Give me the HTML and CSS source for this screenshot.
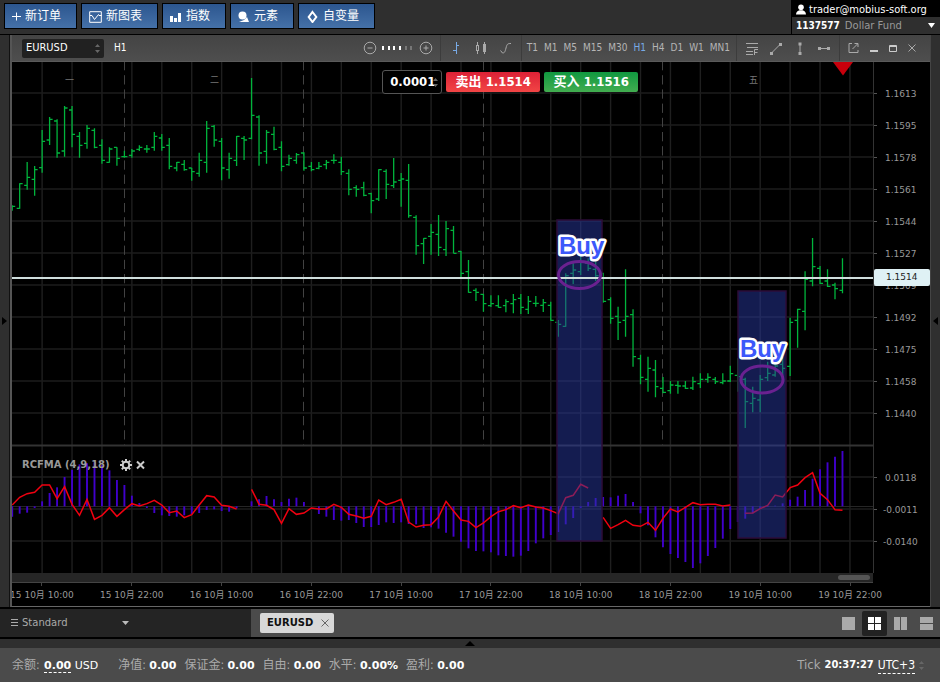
FILE: index.html
```html
<!DOCTYPE html>
<html lang="zh">
<head>
<meta charset="utf-8">
<title>EURUSD</title>
<link rel="stylesheet" href="styles.css">
</head>
<body>
<header class="topbar">
  <nav class="actions">
    <button class="action"><svg width="9" height="13" viewBox="0 0 9 13"><path d="M4.500 2.500v8M0 6.500h9" class="ln"/></svg>新订单</button>
    <button class="action"><svg width="13" height="13" viewBox="0 0 13 13"><path d="M.7 1.700h11.600v10.600H.7zM1 5.500h2l2.500 4 4-5 .5 1h2.500" class="ln"/></svg>新图表</button>
    <button class="action"><svg width="12" height="13" viewBox="0 0 12 13"><path d="M0 6h3v6H0zM4 8h3v4H4zM8 3h3v9H8z" class="fl"/></svg>指数</button>
    <button class="action"><svg width="12" height="13" viewBox="0 0 12 13"><circle cx="4.500" cy="5.500" r="4" class="fl"/><path d="M1 12h10L9 7l-3 3z" class="fl"/></svg>元素</button>
    <button class="action"><svg width="13" height="13" viewBox="0 0 13 13"><path d="M6.500 2l3.800 5-3.800 5-3.800-5z" class="ln bold"/></svg>自变量</button>
  </nav>
  <div class="account">
    <div class="user"><svg width="10" height="11" viewBox="0 0 10 11"><circle cx="5" cy="3.200" r="2.800" class="fl"/><path d="M0 10.500C0 8 2 6.800 3.500 6.300h3C8 6.800 10 8 10 10.500z" class="fl"/></svg><span>trader@mobius-soft.org</span></div>
    <button class="fund"><b>1137577</b><span>Dollar Fund</span><svg width="7" height="5" viewBox="0 0 7 5"><path d="M0 0h7L3.500 5z" class="fl"/></svg></button>
  </div>
</header>

<main class="work">
  <div class="rail"><svg width="5" height="8" viewBox="0 0 5 8"><path d="M0 0l5 4-5 4z"/></svg></div>
  <section class="window">
    <div class="toolbar">
      <label class="symbol"><select aria-label="Symbol"><option>EURUSD</option></select><svg width="5" height="9" viewBox="0 0 5 9"><path d="M0 3l2.500-3L5 3zM0 6l2.500 3L5 6z"/></svg></label>
      <span class="period">H1</span>
      <div class="zoom">
        <button aria-label="Zoom out"><svg width="14" height="14" viewBox="0 0 14 14"><circle cx="7" cy="7" r="5.800" class="ic"/><path d="M4.500 7h5" class="ic"/></svg></button>
        <svg width="32" height="4" viewBox="0 0 32 4"><path d="M0 0h2v4H0zM6 0h2v4H6zM11 0h2v4h-2zM17 0h2v4h-2z" fill="#fff"/><path d="M23 0h2v4h-2zM28 0h2v4h-2z" fill="#777"/></svg>
        <button aria-label="Zoom in"><svg width="14" height="14" viewBox="0 0 14 14"><circle cx="7" cy="7" r="5.800" class="ic"/><path d="M4.500 7h5M7 4.500v5" class="ic"/></svg></button>
      </div>
      <div class="group types">
        <button aria-label="Bars"><svg width="14" height="14" viewBox="0 0 14 14"><path d="M7.500 1v12M8 4.500h2M4 9.500h3" class="ic on"/></svg></button>
        <button aria-label="Candles"><svg width="14" height="14" viewBox="0 0 14 14"><path d="M3.500 1v3M3.500 10v3M10.500 1v12" class="ic"/><rect x="2.500" y="4.500" width="2" height="5" class="ic"/><path d="M9 3h3v8H9z" fill="#aaa"/></svg></button>
        <button aria-label="Line"><svg width="14" height="14" viewBox="0 0 14 14"><path d="M1.500 9.500l2 2.500c2 0 2.500-1 3.500-5s1.500-4.500 5-4.500" class="ic"/></svg></button>
      </div>
      <div class="group frames">
        <button>T1</button><button>M1</button><button>M5</button><button>M15</button><button>M30</button><button class="active">H1</button><button>H4</button><button>D1</button><button>W1</button><button>MN1</button>
      </div>
      <div class="group draws">
        <button aria-label="Fibonacci"><svg width="14" height="14" viewBox="0 0 14 14"><path d="M1 2.500h12M2 6.500h11M1 10.500h7M1 13.500h7M9.500 14V8.500H13M9.500 11.500h3" class="ic"/></svg></button>
        <button aria-label="Trend line"><svg width="14" height="14" viewBox="0 0 14 14"><path d="M2.500 12L11.500 3" class="ic"/><path d="M1 11h3v3H1zM10 2h3v3h-3z" fill="#aaa"/></svg></button>
        <button aria-label="Vertical line"><svg width="14" height="14" viewBox="0 0 14 14"><path d="M7 2v11" class="ic"/><path d="M5.500 1.500h3v3h-3zM5.500 11h3v3h-3z" fill="#aaa"/></svg></button>
        <button aria-label="Horizontal line"><svg width="14" height="14" viewBox="0 0 14 14"><path d="M1 7.500h12" class="ic"/><path d="M1 6h3v3H1zM10 6h3v3h-3z" fill="#aaa"/></svg></button>
      </div>
      <div class="group wins">
        <button aria-label="Detach"><svg width="11" height="12" viewBox="0 0 11 12"><path d="M4 1.500H1v9h9V8M4.500 7L9.500 2M6.500 1.500H10V5" class="ic"/></svg></button>
        <button aria-label="Minimize"><svg width="8" height="12" viewBox="0 0 8 12"><path d="M0 8h8v2H0z" fill="#ccc"/></svg></button>
        <button aria-label="Maximize"><svg width="8" height="12" viewBox="0 0 8 12"><path d="M.5 3.500h7v6h-7zM.5 4.500h7" class="ic lit"/></svg></button>
        <button aria-label="Close"><svg width="8" height="12" viewBox="0 0 8 12"><path d="M.5 2.500l7 7M7.500 2.500l-7 7" class="ic"/></svg></button>
      </div>
    </div>

    <div class="chart">
      <div class="plot">
        <svg id="plot" class="canvas" viewBox="12 62 861 511" preserveAspectRatio="none" role="img" aria-label="EURUSD H1"></svg>
        <div class="trade">
          <label class="volume"><input type="text" value="0.0001" aria-label="Volume"><svg width="5" height="9" viewBox="0 0 5 9"><path d="M0 3l2.500-3L5 3zM0 6l2.500 3L5 6z"/></svg></label>
          <button class="sell">卖出 1.1514</button>
          <button class="buy">买入 1.1516</button>
        </div>
        <div class="indicator"><span>RCFMA (4,9,18)</span>
          <button aria-label="Settings"><svg width="12" height="12" viewBox="0 0 12 12"><circle cx="6" cy="6" r="3.300" fill="none" stroke="#ccc" stroke-width="2"/><path d="M6 0v2.500M6 9.500V12M0 6h2.500M9.500 6H12M1.800 1.800l1.600 1.600M8.600 8.600l1.600 1.600M1.800 10.200l1.600-1.600M8.600 3.400l1.600-1.600" stroke="#ccc" stroke-width="2"/></svg></button>
          <button aria-label="Remove"><svg width="9" height="12" viewBox="0 0 9 12"><path d="M1 2.500l7 7M8 2.500l-7 7" stroke="#ccc" stroke-width="2"/></svg></button>
        </div>
      </div>
      <div class="scale">
        <div class="prices"><span>1.1613</span><span>1.1595</span><span>1.1578</span><span>1.1561</span><span>1.1544</span><span>1.1527</span><span>1.1509</span><span>1.1492</span><span>1.1475</span><span>1.1458</span><span>1.1440</span></div>
        <div class="levels"><span>0.0118</span><span>-0.0011</span><span>-0.0140</span></div>
        <span class="current">1.1514</span>
      </div>
    </div>
    <div class="scroll"><i></i></div>
    <div class="times"><span>15 10月 10:00</span><span>15 10月 22:00</span><span>16 10月 10:00</span><span>16 10月 22:00</span><span>17 10月 10:00</span><span>17 10月 22:00</span><span>18 10月 10:00</span><span>18 10月 22:00</span><span>19 10月 10:00</span><span>19 10月 22:00</span></div>
  </section>
  <div class="rail right"><svg width="5" height="8" viewBox="0 0 5 8"><path d="M5 0L0 4l5 4z"/></svg></div>
</main>

<div class="tabs">
  <button class="workspace"><svg width="7" height="8" viewBox="0 0 7 8"><path d="M0 .5h7M0 3.500h7M0 6.500h7" class="ic"/></svg><span>Standard</span><svg width="7" height="5" viewBox="0 0 7 5"><path d="M0 0h7L3.500 4z" fill="#bbb"/></svg></button>
  <div class="open">
    <button class="tab">EURUSD<svg width="8" height="8" viewBox="0 0 8 8"><path d="M.5.5l7 7M7.500.5l-7 7" stroke="#666"/></svg></button>
    <div class="layouts">
      <button aria-label="Single"><svg width="13" height="13"><path d="M0 0h13v13H0z"/></svg></button>
      <button class="active" aria-label="Grid"><svg width="13" height="13"><path d="M0 0h6v6H0zM7 0h6v6H7zM0 7h6v6H0zM7 7h6v6H7z"/></svg></button>
      <button aria-label="Columns"><svg width="13" height="13"><path d="M0 0h6v13H0zM7 0h6v13H7z"/></svg></button>
      <button aria-label="Rows"><svg width="13" height="13"><path d="M0 0h13v6H0zM0 7h13v6H0z"/></svg></button>
    </div>
  </div>
</div>
<div class="grip"><svg width="10" height="5" viewBox="0 0 10 5"><path d="M0 5l5-5 5 5z"/></svg></div>
<footer class="status">
  <span class="item first">余额: <b class="dash">0.00</b> <em>USD</em></span>
  <span class="item">净值: <b>0.00</b></span>
  <span class="item">保证金: <b>0.00</b></span>
  <span class="item">自由: <b>0.00</b></span>
  <span class="item">水平: <b>0.00%</b></span>
  <span class="item">盈利: <b>0.00</b></span>
  <span class="clock">Tick <b>20:37:27</b> <button class="zone">UTC+3</button><svg width="5" height="9" viewBox="0 0 5 9"><path d="M0 3l2.500-3L5 3zM0 6l2.500 3L5 6z"/></svg></span>
</footer>
<script src="chart.js"></script>
</body>
</html>
```
FILE: styles.css
```css
* { box-sizing: border-box; }
body {
  margin: 0;
  min-height: 100vh;
  display: flex;
  flex-direction: column;
  background: #2f2f2f;
  color: #fff;
  font: 10px/12px "DejaVu Sans Condensed", "DejaVu Sans", "Noto Sans CJK SC", sans-serif;
  overflow: hidden;
}
svg { display: block; flex: none; }
button, input, select {
  font: inherit;
  color: inherit;
  background: none;
  border: 0;
  padding: 0;
  margin: 0;
  appearance: none;
  white-space: nowrap;
}
.ln { fill: none; stroke: #fff; stroke-width: 1; }
.ln.bold { stroke-width: 2; }
.fl { fill: #fff; }
.ic { fill: none; stroke: #aaa; stroke-width: 1; }
.ic.on { stroke: #78aae6; }
.ic.lit { stroke: #ccc; }

.topbar { display: flex; justify-content: space-between; height: 35px; border-bottom: 1px solid #000; }
.actions { display: flex; gap: 4px; padding: 3px 0 0 4px; }
.action {
  display: flex;
  align-items: center;
  gap: 4px;
  height: 26px;
  padding: 0 15px 0 7px;
  border: 1px solid #000;
  background: linear-gradient(#2c568f, #4571a8);
  font-size: 12px;
}
.account { width: 149px; padding-top: 2px; border-left: 1px solid #000; background: #000; }
.user { display: flex; align-items: center; gap: 3px; height: 15px; padding-left: 4px; font-size: 11px; }
.fund { display: flex; align-items: center; gap: 5px; width: 100%; height: 17px; padding: 0 5px 0 4px; background: #2f2f2f; color: #999; font-family: "DejaVu Sans", sans-serif; }
.fund b { color: #fff; font-family: "DejaVu Sans Condensed", sans-serif; }
.fund svg { margin-left: auto; }

.work { flex: 1; display: flex; min-height: 0; background: #2f2f2f; border-bottom: 2px solid #000; }
.rail { width: 10px; display: flex; align-items: center; justify-content: center; flex: none; border-right: 1px solid #111; }
.rail.right { border-right: 0; border-left: 1px solid #444; }
.rail svg { fill: #000; }
.window { flex: 1; min-width: 0; display: flex; flex-direction: column; background: #000; border-left: 2px solid #555; border-bottom: 1px solid #666; overflow: hidden; }

.toolbar { display: flex; align-items: center; height: 27px; padding: 0 14px 0 10px; background: linear-gradient(#444, #4e4e4e); border-bottom: 1px solid #5a5a5a; color: #b5b5b5; }
.symbol { display: flex; align-items: center; width: 82px; height: 19px; padding: 0 4px; border-radius: 2px; background: #212121; color: #fff; }
.symbol select { flex: 1; font-size: 11px; }
.symbol svg, .volume svg, .clock svg { fill: #666; }
.period { margin-left: 10px; color: #fff; }
.zoom { display: flex; align-items: center; gap: 5px; margin-left: auto; padding-right: 7px; }
.group { display: flex; align-items: center; height: 26px; border-left: 1px solid #3c3c3c; }
.types { gap: 11px; padding: 0 8px; }
.frames { gap: 6px; padding: 0 6px 0 5px; }
.frames .active { color: #78aae6; }
.draws { gap: 10px; padding: 0 8px; }
.wins { gap: 11px; padding-left: 8px; }

.chart { flex: 1; min-height: 0; display: flex; }
.plot { position: relative; flex: 1; min-width: 0; border-right: 1px solid #333; }
.canvas { position: absolute; width: 100%; height: 100%; }
.trade { position: absolute; top: 8px; left: 43%; display: flex; align-items: center; gap: 4px; font: bold 13px/16px "DejaVu Sans Condensed", "Noto Sans CJK SC", sans-serif; }
.volume { display: flex; align-items: center; width: 60px; height: 24px; padding: 0 3px 0 7px; border: 1px solid #555; border-radius: 3px; background: #000; }
.volume input { flex: none; width: 47px; }
.volume svg { margin-left: -4px; }
.sell, .buy { height: 20px; width: 94px; border-radius: 2px; }
.sell { background: linear-gradient(#dc2136, #f24545); }
.buy { background: linear-gradient(#109840, #42ad50); }
.indicator { position: absolute; top: 397px; left: 10px; display: flex; align-items: center; gap: 4px; color: #999; font: bold 10px/12px "DejaVu Sans", sans-serif; }
.indicator span { margin-right: 6px; }
.scale { position: relative; width: 56px; flex: none; color: #999; font-family: "DejaVu Sans", sans-serif; font-size: 9px; }
.prices, .levels { display: flex; flex-direction: column; padding-top: 16px; }
.prices span, .levels span { height: 32px; line-height: 32px; padding-left: 11px; }
.prices span::before, .levels span::before { content: ""; float: left; width: 3px; height: 1px; margin: 15px 0 0 -11px; background: #555; }
.levels { padding-top: 32px; }
.levels span + span { padding-left: 9px; }
.levels span + span::before { margin-left: -9px; }
.current { position: absolute; top: 207px; left: 0; right: 0; height: 17px; padding-left: 12px; border-radius: 2px; background: #dff1f5; color: #222; line-height: 17px; }
.scroll { height: 10px; margin-right: 57px; padding: 2px 3px 0; background: #262626; border-bottom: 1px solid #444; }
.scroll i { display: block; width: 32px; height: 5px; margin-left: auto; border-radius: 3px; background: #555; }
.times { display: grid; grid-template-columns: repeat(10, 1fr); height: 23px; margin: 0 35px 0 -15px; color: #999; font: 9px/12px "DejaVu Sans", "Noto Sans CJK SC", sans-serif; }
.times span { text-align: center; white-space: nowrap; }
.times span::before { content: ""; display: block; width: 1px; height: 3px; margin: 0 auto 3px; background: #444; }

.tabs { display: flex; height: 28px; background: #4b4b4b; }
.workspace { display: flex; align-items: center; gap: 4px; width: 251px; padding-left: 11px; background: #242424; color: #aaa; font-family: "DejaVu Sans", sans-serif; }
.workspace svg:last-child { margin-left: 50px; }
.open { flex: 1; display: flex; align-items: center; justify-content: space-between; padding: 0 1px 0 9px; }
.tab { display: flex; align-items: center; gap: 8px; height: 20px; padding: 0 5px 0 7px; border-radius: 2px; background: #d8d8d8; color: #111; font: bold 10px/14px "DejaVu Sans", sans-serif; }
.layouts { display: flex; gap: 1px; }
.layouts button { width: 25px; height: 25px; padding: 6px; border-radius: 2px; }
.layouts svg { fill: #aaa; }
.layouts .active { background: #222; }
.layouts .active svg { fill: #fff; }
.grip { display: flex; justify-content: center; align-items: center; height: 11px; border-top: 2px solid #000; background: #2f2f2f; }
.status { display: flex; align-items: center; gap: 8px; height: 34px; padding: 0 16px 0 12px; background: #4b4b4b; color: #aaa; font-size: 12px; line-height: 16px; white-space: nowrap; }
.item b { color: #fff; font: bold 11px/14px "DejaVu Sans", sans-serif; }
.item.first { margin-right: 12px; }
.item em { color: #fff; font: 11px/14px "DejaVu Sans", sans-serif; }
.item .dash { margin-left: 1px; }
.item .dash, .zone { border-bottom: 1px dashed #fff; }
.clock { display: flex; align-items: center; gap: 4px; margin-left: auto; font-size: 13px; }
.clock b { color: #fff; font: bold 11px/14px "DejaVu Sans Condensed", sans-serif; }
.zone { color: #fff; font-size: 12px; }
```
FILE: chart.js
```js
const svg = document.getElementById("plot");
const NS = "http://www.w3.org/2000/svg";
const x = i => 12.2 + i * 7.48;
const priceY = v => 60 + v / 3;
const levelY = v => 430 + v / 3;
const ZERO = 229;

function add(tag, attrs, text) {
  const el = document.createElementNS(NS, tag);
  for (const k in attrs) el.setAttribute(k, attrs[k]);
  if (text) el.textContent = text;
  svg.appendChild(el);
}

// high, low, open, close for each hour
const bars = [
[436,452,450,439],[370,446,445,371],[306,389,376,352],[318,407,358,329],[210,338,323,244],[171,255,240,178],[178,293,183,279],[138,290,273,144],
[138,262,150,223],[216,293,229,256],[195,266,250,205],[205,265,211,262],[238,311,256,301],[262,308,307,267],[262,317,262,295],[272,293,290,290],
[267,293,286,273],[256,273,268,262],[255,278,267,267],[216,272,262,229],[222,272,234,262],[234,328,256,319],[306,334,324,307],[300,332,313,329],
[324,362,324,335],[278,350,340,301],[183,338,307,205],[195,260,199,240],[234,361,244,324],[278,356,329,295],[228,318,301,229],[228,300,235,240],
[54,238,235,166],[166,317,171,279],[210,311,274,217],[200,271,223,268],[244,334,262,319],[284,317,314,295],[279,311,301,284],[277,332,279,324],
[306,334,319,329],[306,328,325,319],[300,328,314,307],[283,311,301,301],[290,345,307,335],[328,406,340,388],[376,410,383,388],[365,409,383,406],
[398,460,401,422],[328,423,417,329],[328,417,334,373],[294,384,377,366],[339,440,361,357],[312,473,361,467],[466,584,472,557],[535,612,551,535],
[492,584,529,517],[465,588,523,562],[483,588,569,506],[498,580,511,580],[573,655,574,640],[600,698,635,697],[685,723,691,697],[702,755,703,731],
[706,741,737,731],[706,743,737,742],[718,757,737,725],[702,760,731,719],[702,762,715,742],[708,762,748,724],[708,740,730,730],[717,756,736,728],
[725,782,736,781],[780,830,787,793],[640,800,799,647],[610,672,640,630],[585,645,635,605],[595,633,610,625],[605,663,628,647],[638,728,640,724],
[712,791,719,775],[740,840,769,787],[628,830,781,769],[748,920,764,890],[884,973,896,952],[890,995,958,925],[900,1012,930,980],[951,1000,985,997],
[963,1001,992,975],[963,1001,976,978],[963,987,978,985],[950,990,984,965],[940,984,971,958],[940,968,958,952],[951,972,958,965],[940,973,968,963],
[917,966,963,941],[895,995,946,950],[953,1104,958,1025],[980,1057,1030,1015],[945,1057,1020,958],[905,963,953,940],[905,950,945,918],[890,945,913,925],
[773,948,919,787],[746,863,781,748],[634,811,754,658],[534,679,663,620],[618,672,625,670],[628,681,663,679],[668,718,675,686],[595,700,691,654]];

const histogram = [260,251,248,234,214,189,172,141,119,103,100,97,105,121,150,165,197,219,234,249,256,258,260,256,252,249,240,238,243,245,235,229,
214,208,198,208,216,206,203,216,229,252,260,270,272,270,279,291,291,285,277,279,277,282,283,294,292,296,308,320,335,355,363,364,367,376,378,380,377,363,
340,325,315,306,283,264,234,216,204,201,202,197,192,216,250,286,322,352,372,384,396,414,400,378,354,326,297,276,266,250,237,231,227,220,209,200,180,146,
118,97,80,63];

const signal = [225,202,191,187,165,165,206,170,223,256,208,268,256,233,259,239,221,228,221,211,225,248,243,263,254,225,197,201,226,229,237,null,
178,223,226,239,280,236,253,249,234,237,237,223,232,253,258,265,259,210,224,217,208,276,291,286,284,261,214,243,270,274,293,279,260,245,239,227,233,225,
231,234,242,251,203,196,163,174,null,262,295,284,271,286,289,277,301,265,237,246,232,218,224,223,223,228,225,null,250,249,236,226,195,201,173,165,143,
128,190,209,239,241];

for (let i = 4; i < 116; i += 4)
  add("path", { d: `M${x(i)} 62V573`, stroke: "#1f1f1f", "stroke-width": 1.4 });
for (let n = 0; n < 11; n++)
  add("path", { d: `M12 ${93 + n * 32}H873`, stroke: "#1c1c1c", "stroke-width": 1.6 });
for (const y of [477, 509, 541])
  add("path", { d: `M12 ${y}H873`, stroke: "#1c1c1c", "stroke-width": 1.6 });
add("path", { d: "M12 506.500H873", stroke: "#262626" });
for (const i of [15, 39, 63, 87])
  add("path", { d: `M${Math.floor(x(i)) + .5} 61V445`, stroke: "#424242", "stroke-dasharray": "9.300 4.900" });
add("path", { d: "M12 445.500H873", stroke: "#333", "stroke-width": 2 });

for (const [px, day] of [[65, "一"], [210, "二"], [749, "五"]])
  add("text", { x: px, y: 83, class: "day", fill: "#777", "font-size": 9 }, day);

histogram.forEach((v, i) =>
  add("path", { d: `M${x(i)} ${levelY(ZERO)}V${levelY(v)}`, stroke: "#4000cc", "stroke-width": 1.9 }));

let line = "", pen = "M";
signal.forEach((v, i) => {
  if (v === null) { pen = "M"; return; }
  line += `${pen}${x(i)} ${levelY(v)}`;
  pen = "L";
});
add("path", { d: line, fill: "none", stroke: "#f00010", "stroke-width": 1.5 });

bars.forEach(([h, l, o, c], i) => {
  const cx = x(i);
  add("path", {
    d: `M${cx} ${priceY(h)}V${priceY(l)}M${cx - 3} ${priceY(o)}H${cx}M${cx} ${priceY(c)}H${cx + 3}`,
    stroke: "#00b43c", "stroke-width": 1.3, fill: "none"
  });
});

for (const [rx, ry, w, h] of [[557, 220, 45, 321], [738, 291, 48, 247]])
  add("rect", { x: rx, y: ry, width: w, height: h, fill: "#2838a0", "fill-opacity": .5, stroke: "#2c0d38", "stroke-width": 1.5 });

add("path", { d: "M12 278H873", stroke: "#cfdedd", "stroke-width": 2 });

for (const [ex, ey, tx, ty] of [[579.5, 275, 559, 254], [762, 379.5, 740, 357]]) {
  add("ellipse", { cx: ex, cy: ey, rx: 21, ry: 13.5, fill: "none", stroke: "#6a2190", "stroke-width": 3 });
  add("text", { x: tx, y: ty, fill: "#3c58fa", stroke: "#fff", "stroke-width": 5, "stroke-linejoin": "round", "paint-order": "stroke", "font-family": "Liberation Sans, sans-serif", "font-weight": "bold", "font-size": 24 }, "Buy");
}
add("path", { d: "M833 62H853L843 75.500z", fill: "#c8000c" });
```
